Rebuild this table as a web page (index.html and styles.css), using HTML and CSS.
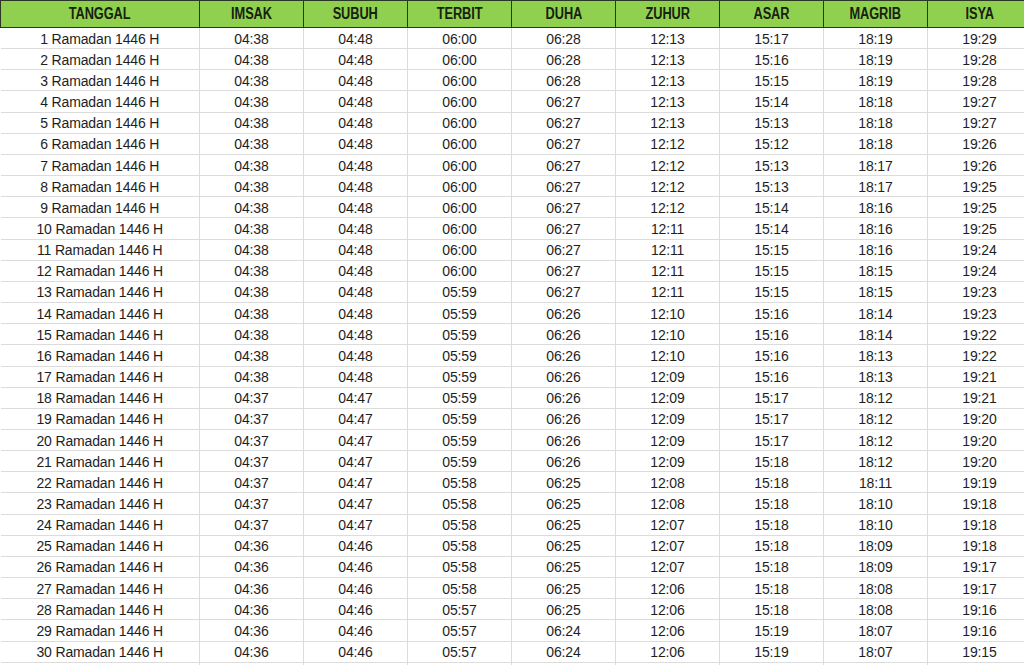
FILE: index.html
```html
<!DOCTYPE html>
<html lang="id">
<head>
<meta charset="utf-8">
<title>Jadwal Imsakiyah Ramadan 1446 H</title>
<link rel="stylesheet" href="styles.css">
</head>
<body>
<table class="sheet">
<colgroup>
<col class="c-date"><col class="c-time"><col class="c-time"><col class="c-time"><col class="c-time"><col class="c-time"><col class="c-time"><col class="c-time"><col class="c-time">
</colgroup>
<thead>
<tr class="head"><th><span>TANGGAL</span></th><th><span>IMSAK</span></th><th><span>SUBUH</span></th><th><span>TERBIT</span></th><th><span>DUHA</span></th><th><span>ZUHUR</span></th><th><span>ASAR</span></th><th><span>MAGRIB</span></th><th><span>ISYA</span></th></tr>
</thead>
<tbody>
<tr><td>1 Ramadan 1446 H</td><td>04:38</td><td>04:48</td><td>06:00</td><td>06:28</td><td>12:13</td><td>15:17</td><td>18:19</td><td>19:29</td></tr>
<tr><td>2 Ramadan 1446 H</td><td>04:38</td><td>04:48</td><td>06:00</td><td>06:28</td><td>12:13</td><td>15:16</td><td>18:19</td><td>19:28</td></tr>
<tr><td>3 Ramadan 1446 H</td><td>04:38</td><td>04:48</td><td>06:00</td><td>06:28</td><td>12:13</td><td>15:15</td><td>18:19</td><td>19:28</td></tr>
<tr><td>4 Ramadan 1446 H</td><td>04:38</td><td>04:48</td><td>06:00</td><td>06:27</td><td>12:13</td><td>15:14</td><td>18:18</td><td>19:27</td></tr>
<tr><td>5 Ramadan 1446 H</td><td>04:38</td><td>04:48</td><td>06:00</td><td>06:27</td><td>12:13</td><td>15:13</td><td>18:18</td><td>19:27</td></tr>
<tr><td>6 Ramadan 1446 H</td><td>04:38</td><td>04:48</td><td>06:00</td><td>06:27</td><td>12:12</td><td>15:12</td><td>18:18</td><td>19:26</td></tr>
<tr><td>7 Ramadan 1446 H</td><td>04:38</td><td>04:48</td><td>06:00</td><td>06:27</td><td>12:12</td><td>15:13</td><td>18:17</td><td>19:26</td></tr>
<tr><td>8 Ramadan 1446 H</td><td>04:38</td><td>04:48</td><td>06:00</td><td>06:27</td><td>12:12</td><td>15:13</td><td>18:17</td><td>19:25</td></tr>
<tr><td>9 Ramadan 1446 H</td><td>04:38</td><td>04:48</td><td>06:00</td><td>06:27</td><td>12:12</td><td>15:14</td><td>18:16</td><td>19:25</td></tr>
<tr><td>10 Ramadan 1446 H</td><td>04:38</td><td>04:48</td><td>06:00</td><td>06:27</td><td>12:11</td><td>15:14</td><td>18:16</td><td>19:25</td></tr>
<tr><td>11 Ramadan 1446 H</td><td>04:38</td><td>04:48</td><td>06:00</td><td>06:27</td><td>12:11</td><td>15:15</td><td>18:16</td><td>19:24</td></tr>
<tr><td>12 Ramadan 1446 H</td><td>04:38</td><td>04:48</td><td>06:00</td><td>06:27</td><td>12:11</td><td>15:15</td><td>18:15</td><td>19:24</td></tr>
<tr><td>13 Ramadan 1446 H</td><td>04:38</td><td>04:48</td><td>05:59</td><td>06:27</td><td>12:11</td><td>15:15</td><td>18:15</td><td>19:23</td></tr>
<tr><td>14 Ramadan 1446 H</td><td>04:38</td><td>04:48</td><td>05:59</td><td>06:26</td><td>12:10</td><td>15:16</td><td>18:14</td><td>19:23</td></tr>
<tr><td>15 Ramadan 1446 H</td><td>04:38</td><td>04:48</td><td>05:59</td><td>06:26</td><td>12:10</td><td>15:16</td><td>18:14</td><td>19:22</td></tr>
<tr><td>16 Ramadan 1446 H</td><td>04:38</td><td>04:48</td><td>05:59</td><td>06:26</td><td>12:10</td><td>15:16</td><td>18:13</td><td>19:22</td></tr>
<tr><td>17 Ramadan 1446 H</td><td>04:38</td><td>04:48</td><td>05:59</td><td>06:26</td><td>12:09</td><td>15:16</td><td>18:13</td><td>19:21</td></tr>
<tr><td>18 Ramadan 1446 H</td><td>04:37</td><td>04:47</td><td>05:59</td><td>06:26</td><td>12:09</td><td>15:17</td><td>18:12</td><td>19:21</td></tr>
<tr><td>19 Ramadan 1446 H</td><td>04:37</td><td>04:47</td><td>05:59</td><td>06:26</td><td>12:09</td><td>15:17</td><td>18:12</td><td>19:20</td></tr>
<tr><td>20 Ramadan 1446 H</td><td>04:37</td><td>04:47</td><td>05:59</td><td>06:26</td><td>12:09</td><td>15:17</td><td>18:12</td><td>19:20</td></tr>
<tr><td>21 Ramadan 1446 H</td><td>04:37</td><td>04:47</td><td>05:59</td><td>06:26</td><td>12:09</td><td>15:18</td><td>18:12</td><td>19:20</td></tr>
<tr><td>22 Ramadan 1446 H</td><td>04:37</td><td>04:47</td><td>05:58</td><td>06:25</td><td>12:08</td><td>15:18</td><td>18:11</td><td>19:19</td></tr>
<tr><td>23 Ramadan 1446 H</td><td>04:37</td><td>04:47</td><td>05:58</td><td>06:25</td><td>12:08</td><td>15:18</td><td>18:10</td><td>19:18</td></tr>
<tr><td>24 Ramadan 1446 H</td><td>04:37</td><td>04:47</td><td>05:58</td><td>06:25</td><td>12:07</td><td>15:18</td><td>18:10</td><td>19:18</td></tr>
<tr><td>25 Ramadan 1446 H</td><td>04:36</td><td>04:46</td><td>05:58</td><td>06:25</td><td>12:07</td><td>15:18</td><td>18:09</td><td>19:18</td></tr>
<tr><td>26 Ramadan 1446 H</td><td>04:36</td><td>04:46</td><td>05:58</td><td>06:25</td><td>12:07</td><td>15:18</td><td>18:09</td><td>19:17</td></tr>
<tr><td>27 Ramadan 1446 H</td><td>04:36</td><td>04:46</td><td>05:58</td><td>06:25</td><td>12:06</td><td>15:18</td><td>18:08</td><td>19:17</td></tr>
<tr><td>28 Ramadan 1446 H</td><td>04:36</td><td>04:46</td><td>05:57</td><td>06:25</td><td>12:06</td><td>15:18</td><td>18:08</td><td>19:16</td></tr>
<tr><td>29 Ramadan 1446 H</td><td>04:36</td><td>04:46</td><td>05:57</td><td>06:24</td><td>12:06</td><td>15:19</td><td>18:07</td><td>19:16</td></tr>
<tr><td>30 Ramadan 1446 H</td><td>04:36</td><td>04:46</td><td>05:57</td><td>06:24</td><td>12:06</td><td>15:19</td><td>18:07</td><td>19:15</td></tr>
<tr class="spare"><td></td><td></td><td></td><td></td><td></td><td></td><td></td><td></td><td></td></tr>
</tbody>
</table>
</body>
</html>
```

FILE: styles.css
```css
html, body {
  margin: 0;
  padding: 0;
  background: #ffffff;
  overflow: hidden;
}

.sheet {
  border-collapse: collapse;
  table-layout: fixed;
  width: 1032px;
  font-family: "Liberation Sans", Arial, sans-serif;
  color: #1e1e1e;
}

.c-date { width: 199px; }
.c-time { width: 104px; }

.head th {
  background: #8fd14f;
  border: 1px solid #2b3625;
  height: 26px;
  padding: 0;
  font-weight: 700;
  font-size: 16px;
  color: #17220f;
  text-align: center;
  vertical-align: middle;
  white-space: nowrap;
}

.head th span {
  display: inline-block;
  transform: scaleX(0.8);
  letter-spacing: -0.1px;
}

tbody td {
  border: 1px solid #dcdcdc;
  border-top: none;
  height: 19.17px;
  padding: 1px 0 0;
  font-size: 14px;
  letter-spacing: -0.15px;
  text-align: center;
  vertical-align: middle;
  line-height: 16px;
  white-space: nowrap;
}

tbody td:first-child {
  border-left: none;
}
```
